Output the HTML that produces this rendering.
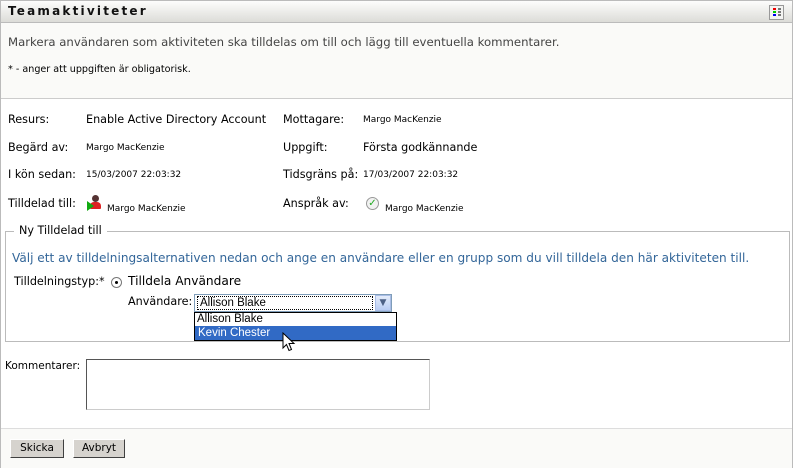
<!DOCTYPE html>
<html><head><meta charset="utf-8"><style>
*{margin:0;padding:0;box-sizing:border-box}
body{width:795px;height:468px;background:#fff;font-family:"DejaVu Sans","Liberation Sans",sans-serif;font-size:11px;color:#000;position:relative;overflow:hidden}
.a{position:absolute;white-space:nowrap}
.t{font-size:11.2px}
.s{font-size:9px}
</style></head><body>
<div class="a" style="left:0;top:0;width:793px;height:468px;border-left:1px solid #bbb;border-right:1px solid #bbb;border-top:1px solid #bbb"></div>
<div class="a" style="left:1px;top:1px;width:791px;height:22px;background:linear-gradient(#fdfdfc,#dcdcd8);border-bottom:1px solid #bbb"></div>
<div class="a" style="left:8px;top:4px;font-weight:bold;font-size:12px;letter-spacing:2.2px;color:#111">Teamaktiviteter</div>
<div class="a" style="left:769px;top:5px;width:15px;height:15px;border:1px solid #999;background:#f4f4f2">
 <div class="a" style="left:3px;top:2px;width:3px;height:2px;background:#e00"></div>
 <div class="a" style="left:3px;top:5px;width:3px;height:2px;background:#0c0"></div>
 <div class="a" style="left:3px;top:8px;width:3px;height:2px;background:#00e"></div>
 <div class="a" style="left:8px;top:2px;width:3px;height:2px;background:#777"></div>
 <div class="a" style="left:8px;top:5px;width:3px;height:2px;background:#777"></div>
 <div class="a" style="left:8px;top:8px;width:3px;height:2px;background:#777"></div>
</div>
<div class="a" style="left:1px;top:23px;width:791px;height:76px;background:#fafaf8;border-bottom:1px solid #ccc"></div>
<div class="a" style="left:8px;top:35px;font-size:11.7px;color:#444">Markera användaren som aktiviteten ska tilldelas om till och lägg till eventuella kommentarer.</div>
<div class="a" style="left:8px;top:64px;font-size:9.6px">* - anger att uppgiften är obligatorisk.</div>

<div class="a t" style="left:8px;top:113px">Resurs:</div>
<div class="a t" style="left:86px;top:113px">Enable Active Directory Account</div>
<div class="a t" style="left:283px;top:113px">Mottagare:</div>
<div class="a s" style="left:363px;top:115px">Margo MacKenzie</div>
<div class="a t" style="left:8px;top:141px">Begärd av:</div>
<div class="a s" style="left:86px;top:143px">Margo MacKenzie</div>
<div class="a t" style="left:283px;top:141px">Uppgift:</div>
<div class="a t" style="left:363px;top:141px">Första godkännande</div>
<div class="a t" style="left:8px;top:168px">I kön sedan:</div>
<div class="a s" style="left:86px;top:170px">15/03/2007 22:03:32</div>
<div class="a t" style="left:283px;top:168px">Tidsgräns på:</div>
<div class="a s" style="left:363px;top:170px">17/03/2007 22:03:32</div>
<div class="a t" style="left:8px;top:197px">Tilldelad till:</div>
<div class="a" style="left:87px;top:195px;width:16px;height:16px">
 <div class="a" style="left:5px;top:0;width:7px;height:7px;border-radius:50%;background:#533"></div>
 <div class="a" style="left:3px;top:7px;width:11px;height:7px;border-radius:4px 4px 1px 1px;background:#d22"></div>
 <div class="a" style="left:0;top:6px;width:0;height:0;border-top:5px solid transparent;border-bottom:5px solid transparent;border-left:7px solid #1a1"></div>
</div>
<div class="a s" style="left:107px;top:204px">Margo MacKenzie</div>
<div class="a t" style="left:283px;top:197px">Anspråk av:</div>
<div class="a" style="left:366px;top:197px;width:13px;height:13px;border-radius:50%;border:1px solid #999;background:#f2f2f2;color:#2a2;font-size:10px;line-height:11px;text-align:center">✓</div>
<div class="a s" style="left:385px;top:204px">Margo MacKenzie</div>

<div class="a" style="left:5px;top:231px;width:785px;height:111px;border:1px solid #bbb"></div>
<div class="a t" style="left:14px;top:224px;background:#fff;padding:0 5px">Ny Tilldelad till</div>
<div class="a" style="left:12px;top:251px;font-size:12.1px;color:#336699">Välj ett av tilldelningsalternativen nedan och ange en användare eller en grupp som du vill tilldela den här aktiviteten till.</div>
<div class="a t" style="left:14px;top:275px">Tilldelningstyp:*</div>
<div class="a" style="left:111px;top:277px;width:11px;height:11px;border-radius:50%;border:1px solid #777;background:#fff"><div class="a" style="left:3px;top:3px;width:3px;height:3px;border-radius:50%;background:#000"></div></div>
<div class="a" style="left:128px;top:274px;font-size:12.2px">Tilldela Användare</div>
<div class="a t" style="left:128px;top:295px">Användare:</div>
<div class="a" style="left:194px;top:294px;width:198px;height:18px;border:1px solid #7f9db9;background:#fff">
 <div class="a" style="left:2px;top:1px;width:176px;height:14px;border:1px dotted #000;font-size:11.5px;padding-left:2px;line-height:12px;font-family:'Liberation Sans',sans-serif">Allison Blake</div>
 <div class="a" style="left:180px;top:0;width:16px;height:16px;background:linear-gradient(#e4ecfb,#b9cdf3);border:1px solid #a9bde6;color:#4d6185;font-size:9px;text-align:center;line-height:14px">▼</div>
</div>
<div class="a" style="left:194px;top:312px;width:203px;height:29px;border:1px solid #000;background:#fff;font-family:'Liberation Sans',sans-serif;font-size:11.5px">
 <div class="a" style="left:2px;top:0;line-height:13px">Allison Blake</div>
 <div class="a" style="left:0;top:13px;width:201px;height:14px;background:#316ac5;color:#fff;padding-left:3px;line-height:14px">Kevin Chester</div>
</div>
<svg class="a" style="left:282px;top:332px" width="14" height="22" viewBox="0 0 14 22"><path d="M1 1 L1 16 L4.5 12.5 L7 18.5 L9.5 17.5 L7 11.5 L12 11.5 Z" fill="#fff" stroke="#000" stroke-width="1"/></svg>

<div class="a" style="left:5px;top:360px;font-size:10.5px">Kommentarer:</div>
<div class="a" style="left:86px;top:359px;width:344px;height:51px;border:1px solid #ccc;border-top-color:#555;border-left-color:#555;background:#fff"></div>
<div class="a" style="left:1px;top:428px;width:791px;height:40px;background:#fafaf8;border-top:1px solid #ddd"></div>
<div class="a" style="left:10px;top:439px;width:54px;height:19px;background:#d6d3ce;border:1px solid;border-color:#fff #404040 #404040 #fff;text-align:center;line-height:16px;font-size:10.5px">Skicka</div>
<div class="a" style="left:73px;top:439px;width:52px;height:19px;background:#d6d3ce;border:1px solid;border-color:#fff #404040 #404040 #fff;text-align:center;line-height:16px;font-size:10.5px">Avbryt</div>
</body></html>
